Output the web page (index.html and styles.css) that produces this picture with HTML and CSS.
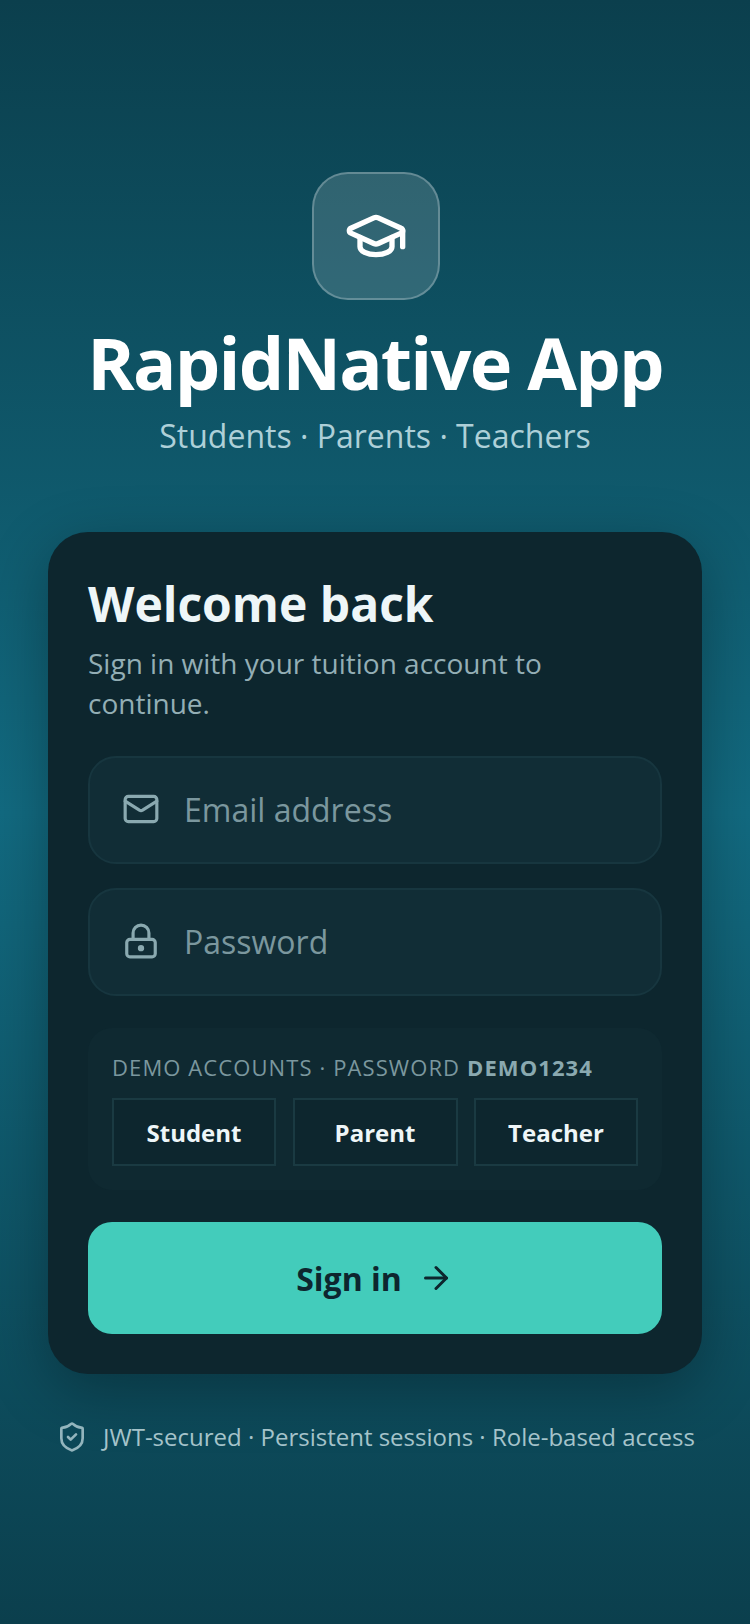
FILE: index.html
```html
<!DOCTYPE html>
<html lang="en">
<head>
<meta charset="utf-8">
<title>RapidNative App</title>
<link rel="stylesheet" href="styles.css">
</head>
<body>
<main class="screen">
  <header class="brand">
    <div class="logo">
      <svg class="logo-icon" viewBox="0 0 24 24" fill="none" stroke="currentColor" stroke-width="2" stroke-linecap="round" stroke-linejoin="round"><path d="M21.42 10.922a1 1 0 0 0-.019-1.838L12.83 5.18a2 2 0 0 0-1.66 0L2.6 9.08a1 1 0 0 0 0 1.832l8.57 3.908a2 2 0 0 0 1.66 0z"/><path d="M22 10v6"/><path d="M6 12.5V16a6 3 0 0 0 12 0v-3.5"/></svg>
    </div>
    <h1 class="title">RapidNative App</h1>
    <p class="subtitle">Students · Parents · Teachers</p>
  </header>
  <section class="card">
    <h2 class="welcome">Welcome back</h2>
    <p class="lead">Sign in with your tuition account to continue.</p>
    <div class="field">
      <svg class="field-icon" viewBox="0 0 24 24" fill="none" stroke="currentColor" stroke-width="2" stroke-linecap="round" stroke-linejoin="round"><path d="m22 7-8.991 5.727a2 2 0 0 1-2.009 0L2 7"/><rect x="2" y="4" width="20" height="16" rx="2"/></svg>
      <span class="placeholder">Email address</span>
    </div>
    <div class="field">
      <svg class="field-icon" viewBox="0 0 24 24" fill="none" stroke="currentColor" stroke-width="2" stroke-linecap="round" stroke-linejoin="round"><rect x="3" y="11" width="18" height="11" rx="2"/><path d="M7 11V7a5 5 0 0 1 10 0v4"/><circle cx="12" cy="16.5" r="1" fill="currentColor"/></svg>
      <span class="placeholder">Password</span>
    </div>
    <div class="demo">
      <p class="demo-label">DEMO ACCOUNTS · PASSWORD <strong class="demo-pass">DEMO1234</strong></p>
      <div class="demo-row">
        <div class="demo-btn">Student</div>
        <div class="demo-btn">Parent</div>
        <div class="demo-btn">Teacher</div>
      </div>
    </div>
    <div class="signin">
      <span>Sign in</span>
      <svg class="signin-icon" viewBox="0 0 24 24" fill="none" stroke="currentColor" stroke-width="2" stroke-linecap="round" stroke-linejoin="round"><path d="M5 12h14"/><path d="m12 5 7 7-7 7"/></svg>
    </div>
  </section>
  <footer class="foot">
    <svg class="foot-icon" viewBox="0 0 24 24" fill="none" stroke="currentColor" stroke-width="2" stroke-linecap="round" stroke-linejoin="round"><path d="M20 13c0 5-3.5 7.5-7.66 8.95a1 1 0 0 1-.67-.01C7.5 20.5 4 18 4 13V6a1 1 0 0 1 1-1c2 0 4.5-1.2 6.24-2.72a1.17 1.17 0 0 1 1.52 0C14.51 3.81 17 5 19 5a1 1 0 0 1 1 1z"/><path d="m9 12 2 2 4-4"/></svg>
    <span>JWT-secured · Persistent sessions · Role-based access</span>
  </footer>
</main>
</body>
</html>
```
FILE: styles.css
```css
* { box-sizing: border-box; }
html, body { margin: 0; padding: 0; }
body {
  width: 750px;
  height: 1624px;
  overflow: hidden;
  font-family: "Open Sans", "Noto Sans", sans-serif;
  background: linear-gradient(180deg, #0b3f4d 0%, #126a80 50%, #0b3f4d 100%);
}
.screen {
  height: 1624px;
  padding: 172px 48px 0;
  display: flex;
  flex-direction: column;
  align-items: stretch;
}
.brand { display: flex; flex-direction: column; align-items: center; }
.logo {
  width: 128px;
  height: 128px;
  margin-left: 2px;
  border-radius: 36px;
  border: 2px solid rgba(255,255,255,0.25);
  background: rgba(255,255,255,0.15);
  display: flex;
  align-items: center;
  justify-content: center;
  color: #fff;
}
.logo-icon { width: 64px; height: 64px; }
.title {
  margin: 20px 0 0;
  font-size: 72px;
  line-height: 84px;
  letter-spacing: -1.8px;
  font-weight: 700;
  color: #fff;
  white-space: nowrap;
}
.subtitle {
  margin: 10px 0 0;
  font-size: 32px;
  line-height: 44px;
  color: #aed0d8;
}
.card {
  margin-top: 74px;
  border-radius: 40px;
  background: #0d262e;
  padding: 42px 40px 40px;
  box-shadow: 0 16px 60px rgba(0,0,0,0.3);
  display: flex;
  flex-direction: column;
}
.welcome {
  margin: 0;
  font-size: 48px;
  line-height: 60px;
  font-weight: 700;
  color: #eef6f8;
}
.lead {
  margin: 9px 0 0;
  font-size: 28px;
  line-height: 40px;
  color: #93aeb5;
}
.field {
  margin-top: 24px;
  height: 108px;
  border-radius: 28px;
  border: 2px solid #17363f;
  background: #112d36;
  padding: 0 32px 2px;
  display: flex;
  align-items: center;
  gap: 24px;
}
.lead + .field { margin-top: 33px; }
.field-icon { width: 38px; height: 38px; color: #8aa9b0; flex: none; }
.placeholder { font-size: 32px; color: #7b979e; }
.demo {
  margin-top: 32px;
  border-radius: 24px;
  background: #0f2931;
  padding: 21px 24px 24px;
}
.demo-label {
  margin: 0;
  font-size: 22px;
  line-height: 36px;
  letter-spacing: 1.1px;
  color: #7b979e;
  white-space: nowrap;
}
.demo-pass { color: #8aa9b0; font-weight: 700; }
.demo-row {
  margin-top: 13px;
  display: grid;
  grid-template-columns: 164fr 165fr 164fr;
  gap: 16.5px;
}
.demo-btn {
  height: 68px;
  border: 2px solid #1a3a42;
  background: #0d262e;
  color: #eef6f8;
  font-size: 24px;
  font-weight: 700;
  display: flex;
  align-items: center;
  justify-content: center;
}
.signin {
  margin-top: 32px;
  height: 112px;
  border-radius: 24px;
  background: #43ccbb;
  color: #0d262e;
  font-size: 32px;
  font-weight: 700;
  display: flex;
  align-items: center;
  justify-content: center;
  gap: 16px;
}
.signin-icon { width: 36px; height: 36px; }
.foot {
  margin-top: 45px;
  padding-left: 1px;
  display: flex;
  align-items: center;
  justify-content: center;
  gap: 15px;
  font-size: 24px;
  line-height: 36px;
  color: #a5c3ca;
  white-space: nowrap;
}
.foot-icon { width: 32px; height: 32px; flex: none; color: #93b5bd; }
```
